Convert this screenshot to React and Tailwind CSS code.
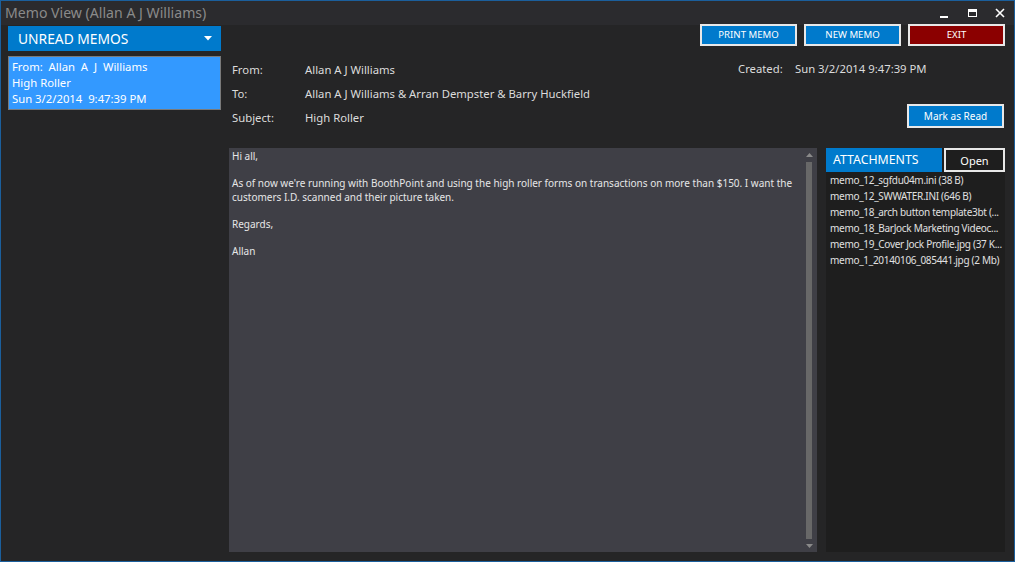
import React from "react";

const FONT = { fontFamily: '"Noto Sans", "Open Sans", sans-serif' };

const attachments = [
  "memo_12_sgfdu04m.ini (38 B)",
  "memo_12_SWWATER.INI (646 B)",
  "memo_18_arch button template3bt (...",
  "memo_18_BarJock Marketing Videoc...",
  "memo_19_Cover Jock Profile.jpg (37 K...",
  "memo_1_20140106_085441.jpg (2 Mb)",
];

function TitleBar() {
  return (
    <div className="h-[24px] shrink-0 bg-[#2b2b2e] flex items-center justify-between">
      <span className="pl-[4px] text-[14.1px] text-[#8a8a8a] leading-none">Memo View (Allan A J Williams)</span>
      <div className="flex items-center h-full text-white">
        <div className="w-[28px] h-full flex items-center justify-center">
          <div className="w-[8px] h-[2px] bg-white mt-[8px]" />
        </div>
        <div className="w-[28px] h-full flex items-center justify-center">
          <div className="w-[9px] h-[8px] border border-white border-t-[3px]" />
        </div>
        <div className="w-[28px] h-full flex items-center justify-center">
          <svg width="10" height="10" viewBox="0 0 10 10">
            <path d="M1 1 L9 9 M9 1 L1 9" stroke="white" strokeWidth="1.6" />
          </svg>
        </div>
      </div>
    </div>
  );
}

function TopButton({ label, red }) {
  return (
    <button
      type="button"
      className={
        "w-[97px] h-[22px] border-2 border-[#e8e8e8] text-[9.6px] leading-none text-white " +
        (red ? "bg-[#8b0000]" : "bg-[#007acc]")
      }
    >
      {label}
    </button>
  );
}

export default function App() {
  return (
    <div
      className="w-[1015px] h-[562px] border border-[#1b5f9c] bg-[#252526] flex flex-col overflow-hidden"
      style={FONT}
    >
      <TitleBar />
      <div className="flex-1 flex pb-[9px] min-h-0">
        {/* left column */}
        <div className="w-[213px] shrink-0 ml-[7px] pt-[1px] flex flex-col">
          <div className="h-[25px] bg-[#007acc] flex items-center justify-between pl-[10px] pr-[9px]">
            <span className="text-[13.8px] text-white leading-none">UNREAD MEMOS</span>
            <svg width="8" height="5" viewBox="0 0 8 5">
              <path d="M0 0 H8 L4 4.5 Z" fill="white" />
            </svg>
          </div>
          <div className="mt-[5px] h-[54px] bg-[#3399ff] border border-[#7a7a7a] pl-[3px] pt-[2px] text-[11.3px] leading-[16px] text-white whitespace-nowrap">
            <div>From:&nbsp; Allan&nbsp; A&nbsp; J&nbsp; Williams</div>
            <div>High Roller</div>
            <div>Sun 3/2/2014&nbsp; 9:47:39 PM</div>
          </div>
        </div>

        {/* main column */}
        <div className="flex-1 min-w-0 ml-[8px] mr-[9px] flex flex-col">
          <div className="h-[123px] shrink-0 flex">
            <div className="flex-1 pt-[33px] pl-[3px] text-[11.3px] leading-[24px] text-[#dcdcdc]">
              <div className="flex">
                <span className="w-[73px]">From:</span>
                <span>Allan A J Williams</span>
              </div>
              <div className="flex">
                <span className="w-[73px]">To:</span>
                <span>Allan A J Williams &amp; Arran Dempster &amp; Barry Huckfield</span>
              </div>
              <div className="flex">
                <span className="w-[73px]">Subject:</span>
                <span>High Roller</span>
              </div>
            </div>
            <div className="w-[305px] flex flex-col items-end">
              <div className="flex gap-[7px] mt-[-1px]">
                <TopButton label="PRINT MEMO" />
                <TopButton label="NEW MEMO" />
                <TopButton label="EXIT" red />
              </div>
              <div className="w-full flex pl-[38px] mt-[11px] text-[11.3px] leading-[24px] text-[#dcdcdc]">
                <span className="w-[57px]">Created:</span>
                <span>Sun 3/2/2014 9:47:39 PM</span>
              </div>
              <button
                type="button"
                className="mt-[23px] mr-[1px] w-[97px] h-[24px] bg-[#007acc] border-2 border-[#e8e8e8] text-[10px] leading-none text-white"
              >
                Mark as Read
              </button>
            </div>
          </div>

          <div className="flex-1 min-h-0 flex gap-[9px]">
            {/* memo body */}
            <div className="w-[588px] shrink-0 bg-[#3f3f46] flex overflow-hidden">
              <div className="flex-1 min-w-0 pl-[3px] pt-[2px] text-[10px] leading-[13.5px] text-[#e6e6e6] whitespace-nowrap overflow-hidden">
                <div>Hi all,</div>
                <div>&nbsp;</div>
                <div>As of now we're running with BoothPoint and using the high roller forms on transactions on more than $150. I want the</div>
                <div>customers I.D. scanned and their picture taken.</div>
                <div>&nbsp;</div>
                <div>Regards,</div>
                <div>&nbsp;</div>
                <div>Allan</div>
              </div>
              <div className="w-[12px] shrink-0 mr-[2px] flex flex-col items-center pt-[5px] pb-[4px]">
                <svg width="7" height="4" viewBox="0 0 7 4">
                  <path d="M0 4 L3.5 0 L7 4 Z" fill="#8a8a8a" />
                </svg>
                <div className="flex-1 w-[6px] bg-[#686868] my-[5px]" />
                <svg width="7" height="4" viewBox="0 0 7 4">
                  <path d="M0 0 L3.5 4 L7 0 Z" fill="#8a8a8a" />
                </svg>
              </div>
            </div>

            {/* attachments */}
            <div className="flex-1 min-w-0 bg-[#1e1e1e] flex flex-col">
              <div className="flex h-[24px] shrink-0">
                <div className="w-[116px] bg-[#007acc] flex items-center pl-[7px] text-[12.3px] leading-none text-white">
                  ATTACHMENTS
                </div>
                <button
                  type="button"
                  className="ml-[2px] flex-1 border-2 border-[#e8e8e8] bg-[#1e1e1e] text-[11px] leading-none text-white"
                >
                  Open
                </button>
              </div>
              <div className="pl-[4px] text-[10px] leading-[16px] text-[#e0e0e0] whitespace-nowrap overflow-hidden">
                {attachments.map((a) => (
                  <div key={a} className="tracking-[-0.3px]">
                    {a}
                  </div>
                ))}
              </div>
            </div>
          </div>
        </div>
      </div>
    </div>
  );
}
